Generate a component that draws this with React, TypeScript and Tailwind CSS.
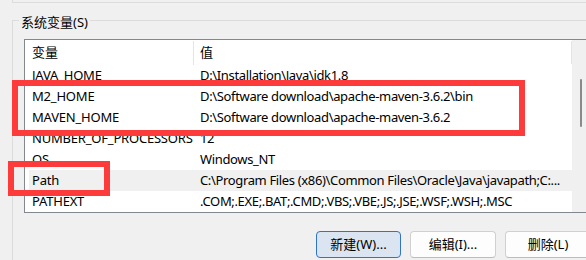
import React from "react";

interface EnvRow {
  name: string;
  value: string;
  selected?: boolean;
}

const rows: EnvRow[] = [
  { name: "JAVA_HOME", value: "D:\\Installation\\Java\\jdk1.8" },
  { name: "M2_HOME", value: "D:\\Software download\\apache-maven-3.6.2\\bin" },
  { name: "MAVEN_HOME", value: "D:\\Software download\\apache-maven-3.6.2" },
  { name: "NUMBER_OF_PROCESSORS", value: "12" },
  { name: "OS", value: "Windows_NT" },
  {
    name: "Path",
    value: "C:\\Program Files (x86)\\Common Files\\Oracle\\Java\\javapath;C:...",
    selected: true,
  },
  { name: "PATHEXT", value: ".COM;.EXE;.BAT;.CMD;.VBS;.VBE;.JS;.JSE;.WSF;.WSH;.MSC" },
];

const Button: React.FC<{ label: string; primary?: boolean }> = ({ label, primary }) => (
  <button
    className={
      primary
        ? "w-[85px] h-[27px] shrink-0 rounded-[4px] border border-[#2f74c9] bg-[#dae5f1] text-[13px] text-black"
        : "w-[86px] h-[27px] shrink-0 rounded-[4px] border border-[#d0d0d0] border-b-[#bcbcbc] bg-[#fdfdfd] text-[13px] text-black"
    }
  >
    {label}
  </button>
);

const App: React.FC = () => {
  return (
    <div
      className="relative w-[586px] h-[260px] overflow-hidden bg-[#f0f0f0] text-black"
      style={{ fontFamily: '"Noto Sans", "Noto Sans CJK SC", sans-serif' }}
    >
      {/* bottom edge of the group above */}
      <div className="ml-[12px] h-[3px] border-l border-b border-[#dcdcdc]" />

      {/* 系统变量 group */}
      <div className="relative mt-[17px] ml-[12px] w-[600px] h-[260px] border-l border-t border-[#dcdcdc]">
        <span className="absolute left-[6px] -top-[9px] px-[2px] bg-[#f0f0f0] text-[13px] leading-[20px]">
          系统变量(S)
        </span>

        <div className="mt-[18px] ml-[11px] flex h-[174px] border-t border-l border-b border-[#828790] bg-white">
          <div className="w-[547px] shrink-0 flex flex-col">
            <div className="flex h-[25px] items-center text-[13px]">
              <div className="w-[168px] shrink-0 pl-[7px]">变量</div>
              <div className="w-px h-[24px] mt-[1px] self-start bg-[#e5e5e5]" />
              <div className="flex-1 pl-[6px]">值</div>
              <div className="w-px h-[23px] mt-[1px] self-start bg-[#e5e5e5]" />
            </div>
            {rows.map((r) => (
              <div
                key={r.name}
                className={
                  r.selected
                    ? "flex h-[21px] items-center ml-[4px] bg-[#f0f0f0] text-[13px] whitespace-nowrap overflow-hidden"
                    : "flex h-[21px] items-center ml-[4px] text-[13px] whitespace-nowrap overflow-hidden"
                }
              >
                <div className="w-[165px] shrink-0 pl-[3px] tracking-[-0.2px]">{r.name}</div>
                <div className="shrink-0 pl-[6px] tracking-[-0.35px]">{r.value}</div>
              </div>
            ))}
          </div>
          <div className="w-[17px] shrink-0 bg-[#f0f0f0] pt-[39px] pl-[8px]">
            <div className="w-[2px] h-[48px] rounded-full bg-[#8a8a8a]" />
          </div>
        </div>

        <div className="mt-[18px] ml-[303px] flex gap-[9px]">
          <Button label="新建(W)..." primary />
          <Button label="编辑(I)..." />
          <Button label="删除(L)" />
        </div>
      </div>

      {/* red annotation boxes */}
      <div className="absolute left-[12px] top-[80px] w-[513px] h-[56px] border-[6px] border-[#fe3b3b]" />
      <div className="absolute left-[8px] top-[161px] w-[102px] h-[35px] border-[6px] border-[#fe3b3b]" />
    </div>
  );
};

export default App;
